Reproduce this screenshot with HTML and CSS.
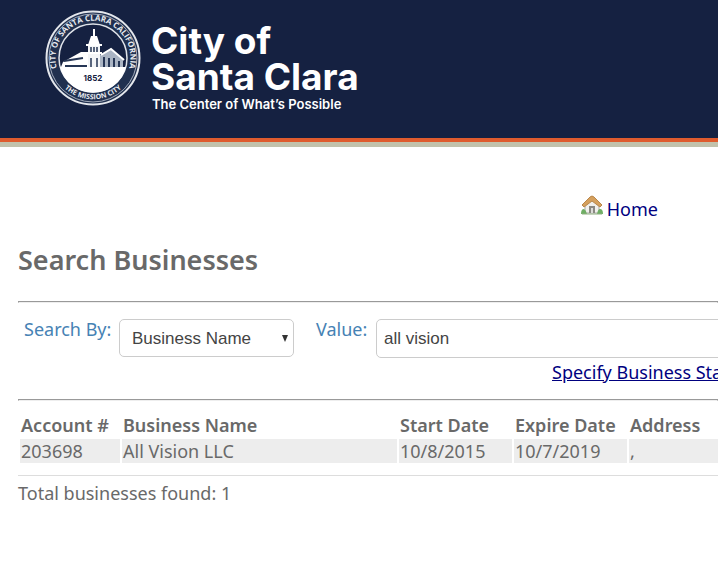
FILE: index.html
```html
<!DOCTYPE html>
<html lang="en">
<head>
  <meta charset="UTF-8">
  <title>Search Businesses - City of Santa Clara</title>
  <link rel="stylesheet" href="styles.css">
</head>
<body>

  <header class="banner">
    <svg class="seal" viewBox="0 0 96 96" width="96" height="96">
      <defs>
        <path id="arcTop" d="M 15 66 A 37.5 37.5 0 1 1 81 66" />
        <path id="arcBottom" d="M 14 72 A 42 42 0 0 0 82 72" />
      </defs>
      <circle cx="48" cy="48" r="46.5" fill="#20304f" stroke="#e4e7ec" stroke-width="2" />
      <circle cx="48" cy="48" r="44" fill="none" stroke="#a5adbc" stroke-width="1" />
      <circle cx="48" cy="48" r="34" fill="#152141" stroke="#dfe3e9" stroke-width="1.5" />
      <path d="M15 57 L81 57 A34 34 0 0 1 15 57 Z" fill="#fff" />
      <!-- mission building -->
      <path d="M18 52 L36 42 L43 42 L43 57 L16 57 Z" fill="#fff" />
      <path d="M19 51 L38 48 M20 56 H42" stroke="#263655" stroke-width="2" />
      <path d="M43 34 H55 V57 H43 Z" fill="#f3f5f7" />
      <path d="M43 35 L46 26 H52 L55 35 Z" fill="#fff" />
      <path d="M49 19 V30 M41 35 H57 M41 43 H57" stroke="#fff" stroke-width="2" />
      <path d="M46 37 V42 M49 37 V42 M52 37 V42 M46 48 V57 M52 48 V57" stroke="#263655" stroke-width="1.5" />
      <path d="M55 45 L66 39 L78 50 V57 H55 Z" fill="#aab4c3" />
      <path d="M56 45 L66 39 L79 50" fill="none" stroke="#fff" stroke-width="2" />
      <path d="M59 47 V57 M64 48 V57 M69 48 V57 M74 51 V57" stroke="#263655" stroke-width="2" />
      <text class="seal-year" x="48" y="71" text-anchor="middle">1852</text>
      <text class="seal-text"><textPath href="#arcTop" startOffset="50%" text-anchor="middle">CITY OF SANTA CLARA CALIFORNIA</textPath></text>
      <text class="seal-text seal-text-small"><textPath href="#arcBottom" startOffset="50%" text-anchor="middle">THE MISSION CITY</textPath></text>
    </svg>
    <div class="brand">
      <div class="brand-name">City of<br>Santa Clara</div>
      <div class="brand-tagline">The Center of What’s Possible</div>
    </div>
  </header>

  <main class="content">
    <nav class="topnav">
      <a href="#" class="home-link">
        <svg viewBox="0 0 22 20" width="22" height="20">
          <path d="M4 9 L11 4 L18 9 V18 H4 Z" fill="#f1f0ed" stroke="#aaa9a5" />
          <path d="M8 18 V11 H14 V18 Z" fill="#8b8983" />
          <path d="M10 18 V13 H12 V18 Z" fill="#dddcd9" />
          <path d="M1 10 L9 2 Q11 0 13 2 L21 10 L19 12 L11 6 L3 12 Z" fill="#d5a05d" stroke="#b9874c" />
          <path d="M0 19 Q0 14 3 14 Q5 15 6 19 Z M16 19 Q17 14 19 14 Q22 14 22 19 Z" fill="#6fae64" />
          <path d="M1 19 H21" stroke="#8fae80" />
        </svg>
        <span>Home</span>
      </a>
    </nav>

    <h1>Search Businesses</h1>
    <hr>

    <form class="search-form">
      <label for="searchBy">Search By:</label>
      <div class="select-wrap">
        <select id="searchBy">
          <option>Business Name</option>
          <option>Account #</option>
          <option>Address</option>
        </select>
      </div>
      <label for="value" class="value-label">Value:</label>
      <div class="value-field">
        <input type="text" id="value" value="all vision">
        <a href="#" class="date-link">Specify Business Start Date</a>
      </div>
    </form>
    <hr>

    <table class="results">
      <thead>
        <tr>
          <th class="col-account">Account #</th>
          <th class="col-name">Business Name</th>
          <th class="col-date">Start Date</th>
          <th class="col-date">Expire Date</th>
          <th class="col-address">Address</th>
        </tr>
      </thead>
      <tbody>
        <tr>
          <td>203698</td>
          <td>All Vision LLC</td>
          <td>10/8/2015</td>
          <td>10/7/2019</td>
          <td>,</td>
        </tr>
      </tbody>
    </table>

    <div class="total">Total businesses found: 1</div>
  </main>

</body>
</html>
```

FILE: styles.css
```css
* {
  box-sizing: border-box;
}

body {
  margin: 0;
  background-color: #fff;
  color: #696969;
  font-family: "Trebuchet MS", "Noto Sans", sans-serif;
  font-size: 18px;
  line-height: 24px;
  overflow-x: hidden;
}

.banner {
  display: flex;
  align-items: flex-start;
  gap: 10px;
  height: 147px;
  padding: 10px 45px;
  background-color: #152141;
  border-bottom: 5px solid #c2c2ac;
  box-shadow: inset 0 -4px #df5b2e;
}

.seal {
  flex: none;
}

.seal-text {
  font: bold 8px "Open Sans", sans-serif;
  fill: #e8ebf0;
}

.seal-text-small {
  font-size: 7px;
}

.seal-year {
  font: bold 8px Inter, sans-serif;
  fill: #152141;
}

.brand {
  padding-top: 13px;
  color: #fff;
  font-family: Inter, sans-serif;
  white-space: nowrap;
}

.brand-name {
  font-size: 37px;
  font-weight: bold;
  line-height: 36px;
}

.brand-tagline {
  padding-left: 1px;
  font-size: 13px;
  font-weight: 600;
  line-height: 18px;
}

.content {
  padding-left: 18px;
  overflow: hidden;
}

.topnav {
  display: flex;
  justify-content: flex-end;
  padding: 50px 60px 0 0;
}

.home-link {
  display: flex;
  align-items: flex-start;
  gap: 4px;
  color: #00007f;
  text-decoration: none;
}

.home-link svg {
  margin-top: -2px;
}

h1 {
  margin: 22px 0 24px;
  font-size: 27px;
  font-weight: 600;
  line-height: 34px;
}

hr {
  margin: 0;
  border: 1px solid #999;
  border-bottom-color: #eee;
}

.search-form {
  display: flex;
  align-items: flex-start;
  padding: 16px 0 15px 6px;
}

.search-form label {
  flex: none;
  width: 95px;
  color: #4682b4;
  line-height: 20px;
}

.search-form .value-label {
  width: 60px;
  margin-left: 22px;
}

.select-wrap {
  position: relative;
  flex: none;
}

.select-wrap::after {
  content: "";
  position: absolute;
  right: 6px;
  top: 16px;
  border: 3px solid transparent;
  border-top: 7px solid #333;
  border-bottom: 0;
  pointer-events: none;
}

select, input {
  height: 38px;
  border: 1px solid #ccc;
  border-radius: 5px;
  background-color: #fff;
  color: #444;
  font-family: "Liberation Sans", Arial, sans-serif;
  font-size: 17px;
}

select {
  width: 175px;
  padding: 0 12px;
  appearance: none;
}

.value-field {
  flex: none;
  width: 420px;
}

.value-field input {
  display: block;
  width: 100%;
  height: 39px;
  padding: 0 7px;
}

.date-link {
  display: block;
  margin: 2px 0 0 176px;
  color: #00007f;
  white-space: nowrap;
}

.results {
  width: 910px;
  margin-top: 10px;
  border-spacing: 2px;
  table-layout: fixed;
}

.results th, .results td {
  padding: 0 1px;
  text-align: left;
  white-space: nowrap;
}

.results th {
  font-weight: 600;
}

.results td {
  background-color: #ededed;
}

.col-account {
  width: 100px;
}

.col-name {
  width: 275px;
}

.col-date {
  width: 113px;
}

.total {
  margin-top: 10px;
  padding-top: 5px;
  border-top: 1px solid #ddd;
}
```
